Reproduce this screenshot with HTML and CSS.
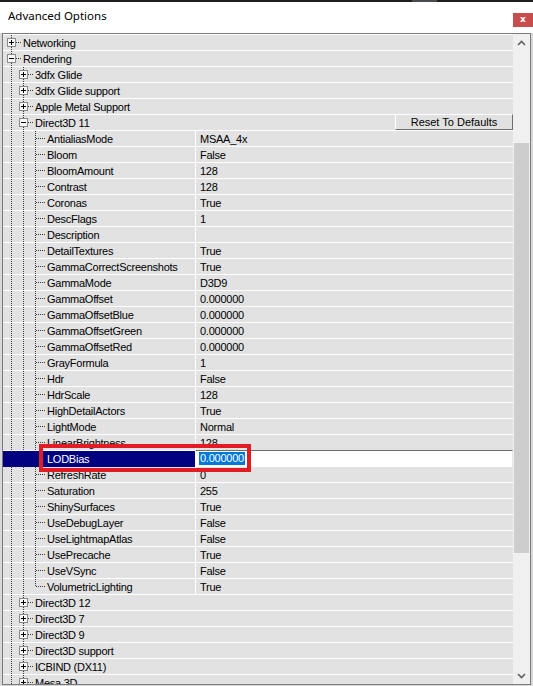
FILE: index.html
```html
<!DOCTYPE html>
<html>
<head>
<meta charset="utf-8">
<title>Advanced Options</title>
<link rel="stylesheet" href="styles.css">
</head>
<body>
<div class="window">
  <div class="topstrip"><span class="tab"></span></div>
  <div class="titlebar">
    <div class="title">Advanced Options</div>
    <div class="close">x</div>
  </div>
  <div class="tree">
    <div class="rows">
      <div class="row"><div class="cat"><span class="n t"><span class="box plus"></span></span><span class="lbl">Networking</span></div></div>
      <div class="row"><div class="cat"><span class="n t"><span class="box minus"></span></span><span class="lbl">Rendering</span></div></div>
      <div class="row"><div class="cat"><span class="g v"></span><span class="n t"><span class="box plus"></span></span><span class="lbl">3dfx Glide</span></div></div>
      <div class="row"><div class="cat"><span class="g v"></span><span class="n t"><span class="box plus"></span></span><span class="lbl">3dfx Glide support</span></div></div>
      <div class="row"><div class="cat"><span class="g v"></span><span class="n t"><span class="box plus"></span></span><span class="lbl">Apple Metal Support</span></div></div>
      <div class="row"><div class="cat"><span class="g v"></span><span class="n t"><span class="box minus"></span></span><span class="lbl">Direct3D 11</span><button class="reset">Reset To Defaults</button></div></div>

      <div class="row"><div class="name"><span class="g v"></span><span class="g v"></span><span class="n t"></span><span class="lbl">AntialiasMode</span></div><div class="val">MSAA_4x</div></div>
      <div class="row"><div class="name"><span class="g v"></span><span class="g v"></span><span class="n t"></span><span class="lbl">Bloom</span></div><div class="val">False</div></div>
      <div class="row"><div class="name"><span class="g v"></span><span class="g v"></span><span class="n t"></span><span class="lbl">BloomAmount</span></div><div class="val">128</div></div>
      <div class="row"><div class="name"><span class="g v"></span><span class="g v"></span><span class="n t"></span><span class="lbl">Contrast</span></div><div class="val">128</div></div>
      <div class="row"><div class="name"><span class="g v"></span><span class="g v"></span><span class="n t"></span><span class="lbl">Coronas</span></div><div class="val">True</div></div>
      <div class="row"><div class="name"><span class="g v"></span><span class="g v"></span><span class="n t"></span><span class="lbl">DescFlags</span></div><div class="val">1</div></div>
      <div class="row"><div class="name"><span class="g v"></span><span class="g v"></span><span class="n t"></span><span class="lbl">Description</span></div><div class="val"></div></div>
      <div class="row"><div class="name"><span class="g v"></span><span class="g v"></span><span class="n t"></span><span class="lbl">DetailTextures</span></div><div class="val">True</div></div>
      <div class="row"><div class="name"><span class="g v"></span><span class="g v"></span><span class="n t"></span><span class="lbl">GammaCorrectScreenshots</span></div><div class="val">True</div></div>
      <div class="row"><div class="name"><span class="g v"></span><span class="g v"></span><span class="n t"></span><span class="lbl">GammaMode</span></div><div class="val">D3D9</div></div>
      <div class="row"><div class="name"><span class="g v"></span><span class="g v"></span><span class="n t"></span><span class="lbl">GammaOffset</span></div><div class="val">0.000000</div></div>
      <div class="row"><div class="name"><span class="g v"></span><span class="g v"></span><span class="n t"></span><span class="lbl">GammaOffsetBlue</span></div><div class="val">0.000000</div></div>
      <div class="row"><div class="name"><span class="g v"></span><span class="g v"></span><span class="n t"></span><span class="lbl">GammaOffsetGreen</span></div><div class="val">0.000000</div></div>
      <div class="row"><div class="name"><span class="g v"></span><span class="g v"></span><span class="n t"></span><span class="lbl">GammaOffsetRed</span></div><div class="val">0.000000</div></div>
      <div class="row"><div class="name"><span class="g v"></span><span class="g v"></span><span class="n t"></span><span class="lbl">GrayFormula</span></div><div class="val">1</div></div>
      <div class="row"><div class="name"><span class="g v"></span><span class="g v"></span><span class="n t"></span><span class="lbl">Hdr</span></div><div class="val">False</div></div>
      <div class="row"><div class="name"><span class="g v"></span><span class="g v"></span><span class="n t"></span><span class="lbl">HdrScale</span></div><div class="val">128</div></div>
      <div class="row"><div class="name"><span class="g v"></span><span class="g v"></span><span class="n t"></span><span class="lbl">HighDetailActors</span></div><div class="val">True</div></div>
      <div class="row"><div class="name"><span class="g v"></span><span class="g v"></span><span class="n t"></span><span class="lbl">LightMode</span></div><div class="val">Normal</div></div>
      <div class="row"><div class="name"><span class="g v"></span><span class="g v"></span><span class="n t"></span><span class="lbl">LinearBrightness</span></div><div class="val">128</div></div>
      <div class="row sel"><div class="name"><span class="g"></span><span class="g"></span><span class="n"></span><span class="lbl">LODBias</span></div><div class="val edit"><span class="selx">0.000000</span></div></div>
      <div class="row"><div class="name"><span class="g v"></span><span class="g v"></span><span class="n t"></span><span class="lbl">RefreshRate</span></div><div class="val">0</div></div>
      <div class="row"><div class="name"><span class="g v"></span><span class="g v"></span><span class="n t"></span><span class="lbl">Saturation</span></div><div class="val">255</div></div>
      <div class="row"><div class="name"><span class="g v"></span><span class="g v"></span><span class="n t"></span><span class="lbl">ShinySurfaces</span></div><div class="val">True</div></div>
      <div class="row"><div class="name"><span class="g v"></span><span class="g v"></span><span class="n t"></span><span class="lbl">UseDebugLayer</span></div><div class="val">False</div></div>
      <div class="row"><div class="name"><span class="g v"></span><span class="g v"></span><span class="n t"></span><span class="lbl">UseLightmapAtlas</span></div><div class="val">False</div></div>
      <div class="row"><div class="name"><span class="g v"></span><span class="g v"></span><span class="n t"></span><span class="lbl">UsePrecache</span></div><div class="val">True</div></div>
      <div class="row"><div class="name"><span class="g v"></span><span class="g v"></span><span class="n t"></span><span class="lbl">UseVSync</span></div><div class="val">False</div></div>
      <div class="row"><div class="name"><span class="g v"></span><span class="g v"></span><span class="n e"></span><span class="lbl">VolumetricLighting</span></div><div class="val">True</div></div>

      <div class="row"><div class="cat"><span class="g v"></span><span class="n t"><span class="box plus"></span></span><span class="lbl">Direct3D 12</span></div></div>
      <div class="row"><div class="cat"><span class="g v"></span><span class="n t"><span class="box plus"></span></span><span class="lbl">Direct3D 7</span></div></div>
      <div class="row"><div class="cat"><span class="g v"></span><span class="n t"><span class="box plus"></span></span><span class="lbl">Direct3D 9</span></div></div>
      <div class="row"><div class="cat"><span class="g v"></span><span class="n t"><span class="box plus"></span></span><span class="lbl">Direct3D support</span></div></div>
      <div class="row"><div class="cat"><span class="g v"></span><span class="n t"><span class="box plus"></span></span><span class="lbl">ICBIND (DX11)</span></div></div>
      <div class="row"><div class="cat"><span class="g v"></span><span class="n t"><span class="box plus"></span></span><span class="lbl">Mesa 3D</span></div></div>
    </div>
    <div class="vscroll">
      <div class="arrow"><svg width="9" height="6" viewBox="0 0 9 6"><polyline points="1,5 4.5,1.5 8,5" fill="none" stroke="#606060" stroke-width="1.6"/></svg></div>
      <div class="track"><div class="thumb"></div></div>
      <div class="arrow"><svg width="9" height="6" viewBox="0 0 9 6"><polyline points="1,1 4.5,4.5 8,1" fill="none" stroke="#606060" stroke-width="1.6"/></svg></div>
    </div>
  </div>
</div>
<div class="annot"></div>
</body>
</html>
```

FILE: styles.css
```css
html, body {
  margin: 0;
  padding: 0;
}
body {
  width: 533px;
  height: 686px;
  overflow: hidden;
  background: #d8d8d8;
  font-family: "Liberation Sans", Arial, sans-serif;
  font-size: 11px;
  color: #000;
}
.window {
  display: flex;
  flex-direction: column;
  height: 686px;
  background: #d8d8d8;
}
.topstrip {
  height: 2px;
  background: #1e1e1e;
  display: flex;
  flex: none;
}
.topstrip .tab {
  margin-left: 412px;
  width: 25px;
  background: #484b50;
}
.titlebar {
  height: 31px;
  flex: none;
  background: #fff;
  display: flex;
  align-items: flex-start;
}
.title {
  font-family: "Noto Sans", sans-serif;
  font-size: 11.5px;
  line-height: 16px;
  padding: 6px 0 0 8px;
  color: #000;
}
.close {
  margin-left: auto;
  margin-top: 11px;
  width: 20px;
  height: 14px;
  background: #c94c4c;
  color: #fff;
  font: bold 9px/13px "DejaVu Sans", sans-serif;
  text-align: center;
}
.tree {
  flex: 1;
  min-height: 0;
  margin: 0 2px 1px 2px;
  border: 1px solid #7a7a7a;
  display: flex;
}
.rows {
  flex: 1;
  overflow: hidden;
  background: #fff;
  padding-top: 1px;
}
.vscroll {
  width: 17px;
  flex: none;
  background: #f0f0f0;
  display: flex;
  flex-direction: column;
}
.arrow {
  height: 17px;
  flex: none;
  display: flex;
  align-items: center;
  justify-content: center;
}
.track {
  flex: 1;
}
.thumb {
  margin: 92px 1px 0 1px;
  height: 410px;
  background: #cdcdcd;
}
.row {
  height: 16px;
  display: flex;
  background: linear-gradient(#e2e2e2 15px, #fff 15px);
  line-height: 16px;
  white-space: nowrap;
  letter-spacing: -0.25px;
}
.name {
  width: 192px;
  flex: none;
  box-sizing: border-box;
  padding-left: 2px;
  display: flex;
}
.cat {
  flex: 1;
  box-sizing: border-box;
  padding-left: 2px;
  display: flex;
}
.val {
  flex: 1;
  border-left: 1px solid #fff;
  padding-left: 4px;
}
.g {
  width: 12px;
  height: 16px;
  flex: none;
}
.g.v {
  background: repeating-linear-gradient(#3a3a3a 0 1px, transparent 1px 2px) 6px 0 / 1px 16px no-repeat;
}
.n {
  width: 18px;
  height: 16px;
  flex: none;
  box-sizing: border-box;
  padding: 3px 0 0 2px;
}
.n.t {
  background:
    repeating-linear-gradient(to right, #3a3a3a 0 1px, transparent 1px 2px) 7px 7px / 10px 1px no-repeat,
    repeating-linear-gradient(#3a3a3a 0 1px, transparent 1px 2px) 6px 0 / 1px 16px no-repeat;
}
.n.e {
  background:
    repeating-linear-gradient(to right, #3a3a3a 0 1px, transparent 1px 2px) 7px 7px / 10px 1px no-repeat,
    repeating-linear-gradient(#3a3a3a 0 1px, transparent 1px 2px) 6px 0 / 1px 8px no-repeat;
}
.box {
  display: block;
  width: 9px;
  height: 9px;
  box-sizing: border-box;
  border: 1px solid #8a8a8a;
}
.box.minus {
  background: linear-gradient(#000, #000) 1px 3px / 5px 1px no-repeat, #f7f7f7;
}
.box.plus {
  background:
    linear-gradient(#000, #000) 1px 3px / 5px 1px no-repeat,
    linear-gradient(#000, #000) 3px 1px / 1px 5px no-repeat,
    #f7f7f7;
}
.reset {
  margin-left: auto;
  margin-top: -1px;
  width: 118px;
  height: 16px;
  box-sizing: border-box;
  padding: 0;
  border: 1px solid;
  border-color: #fff #6d6d6d #6d6d6d #fff;
  background: #e1e1e1;
  font-family: "Liberation Sans", Arial, sans-serif;
  font-size: 11px;
  line-height: 14px;
  letter-spacing: 0;
  color: #000;
  text-align: center;
}
.row.sel .name {
  background: #000080;
  color: #fff;
}
.val.edit {
  background: #fff;
  border-top: 1px solid #6d6d6d;
  border-right: 1px solid #e6e6e6;
  margin-top: -1px;
  height: 17px;
  box-sizing: border-box;
  padding-left: 3px;
}
.selx {
  display: inline-block;
  vertical-align: top;
  margin-top: 1px;
  padding: 0 1px;
  line-height: 13px;
  background: #0078d7;
  color: #fff;
}
.annot {
  position: absolute;
  left: 39px;
  top: 444px;
  width: 212px;
  height: 28px;
  box-sizing: border-box;
  border: 4px solid #e21c24;
}
```
